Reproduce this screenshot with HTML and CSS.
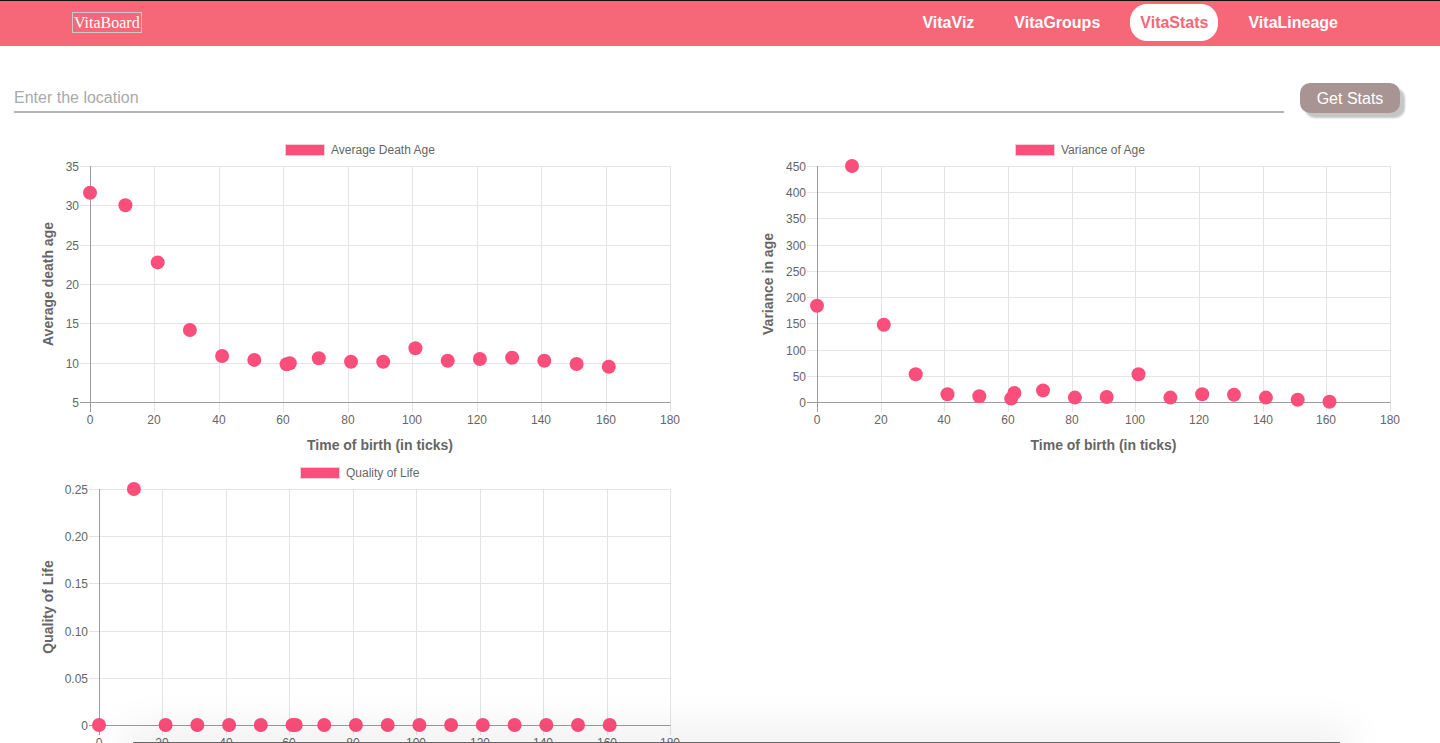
FILE: index.html
```html
<!DOCTYPE html>
<html lang="en">
<head>
<meta charset="utf-8">
<title>VitaStats</title>
<link rel="stylesheet" href="styles.css">
</head>
<body>
<header class="topbar">
  <a class="logo" href="#">VitaBoard</a>
  <nav class="nav-links">
    <a class="nav-link" href="#">VitaViz</a>
    <a class="nav-link" href="#">VitaGroups</a>
    <a class="nav-link active" href="#">VitaStats</a>
    <a class="nav-link" href="#">VitaLineage</a>
  </nav>
</header>
<main>
  <form class="search-row">
    <input class="search-input" type="text" placeholder="Enter the location">
    <button class="search-btn" type="button">Get Stats</button>
  </form>
  <section class="charts">
    <div class="chart"><svg id="c1" class="chart-svg" width="640" height="320" viewBox="0 0 640 320"></svg></div>
    <div class="chart"><svg id="c2" class="chart-svg" width="640" height="320" viewBox="0 0 640 320"></svg></div>
    <div class="chart"><svg id="c3" class="chart-svg" width="640" height="320" viewBox="0 0 640 320"></svg></div>
  </section>
</main>
<div class="dock-shadow"></div>
<script src="script.js"></script>
</body>
</html>
```

FILE: styles.css
```css
html {
  overflow: hidden;
}
body {
  margin: 0;
  font-family: "Liberation Sans", Arial, sans-serif;
  background: #ffffff;
  border-top: 1px solid #111;
}
.topbar {
  height: 45px;
  box-sizing: border-box;
  padding: 0 92px 2px 72px;
  background: #f66777;
  display: flex;
  align-items: center;
  justify-content: space-between;
}
.logo {
  font-family: "Liberation Serif", "Times New Roman", serif;
  font-size: 16px;
  line-height: 19px;
  color: #fff;
  text-decoration: none;
  border: 1px solid #c9c9c9;
  padding: 0 1px;
}
.nav-links {
  display: flex;
  gap: 20px;
}
.nav-link {
  display: block;
  height: 37px;
  line-height: 37px;
  padding: 0 10px;
  border-radius: 17px;
  color: #fff;
  font-weight: bold;
  font-size: 16px;
  text-decoration: none;
}
.nav-link.active {
  background: #fff;
  color: #f66777;
}
.search-row {
  margin: 35px 0 0;
  padding: 0 40px 0 14px;
  display: flex;
  align-items: flex-end;
  gap: 16px;
}
.search-input {
  flex: 1;
  height: 32px;
  box-sizing: border-box;
  padding: 4px 0 0;
  border: none;
  border-bottom: 2px solid #b5b5b5;
  font-family: "Liberation Sans", Arial, sans-serif;
  font-size: 16px;
  color: #333;
  background: transparent;
  outline: none;
}
.search-input::placeholder {
  color: #a9a9a9;
}
.search-btn {
  width: 100px;
  height: 30px;
  border: none;
  border-radius: 10px;
  background: #a99494;
  color: #fff;
  font-family: "Liberation Sans", Arial, sans-serif;
  font-size: 16px;
  box-shadow: 5px 5px 2px #c6c6c6;
  padding: 2px 0 0;
}
.charts {
  margin-top: 20px;
  display: grid;
  grid-template-columns: 720px 720px;
  row-gap: 3px;
}
.chart {
  padding: 0 40px;
}
.chart-svg {
  display: block;
}
.grid {
  stroke: #e4e4e4;
  stroke-width: 1;
}
.axis {
  stroke: #9c9c9c;
  stroke-width: 1;
}
.tick,
.legend-text {
  font-family: "Liberation Sans", Arial, sans-serif;
  font-size: 12px;
  fill: #666;
}
.axis-title {
  font-family: "Liberation Sans", Arial, sans-serif;
  font-size: 14px;
  font-weight: bold;
  fill: #666;
}
.point {
  fill: #fb4e7b;
}
.legend-box {
  fill: #fb4e7b;
  stroke: #f2cdd6;
  stroke-width: 1;
}
.dock-shadow {
  position: fixed;
  left: 133px;
  right: 100px;
  bottom: -1px;
  height: 2px;
  background: #666;
  box-shadow: 0 0 40px 10px rgba(0, 0, 0, 0.10);
}
```

FILE: script.js
```javascript
(function () {
  var NS = 'http://www.w3.org/2000/svg';
  var X1 = 630, YT = 33, YB = 269, XMAX = 180;

  var charts = [
    {
      id: 'c1', legend: 'Average Death Age', legendX: 245, x0: 50,
      yTitle: 'Average death age', yMin: 5, yMax: 35, yStep: 5,
      fmt: function (v) { return String(Math.round(v)); },
      data: [[0, 31.6], [11, 30.0], [21, 22.75], [31, 14.15], [41, 10.85], [51, 10.35], [61, 9.8], [62, 9.92],
             [71, 10.55], [81, 10.12], [91, 10.12], [101, 11.83], [111, 10.25], [121, 10.47], [131, 10.63],
             [141, 10.25], [151, 9.83], [161, 9.49]]
    },
    {
      id: 'c2', legend: 'Variance of Age', legendX: 255, x0: 57,
      yTitle: 'Variance in age', yMin: 0, yMax: 450, yStep: 50,
      fmt: function (v) { return String(Math.round(v)); },
      data: [[0, 183.6], [11, 450], [21, 147.4], [31, 52.8], [41, 14.6], [51, 10.8], [61, 6.4], [62, 17.2],
             [71, 22.2], [81, 8.3], [91, 9.5], [101, 52.8], [111, 8.3], [121, 14.6], [131, 14], [141, 8.3],
             [151, 4.4], [161, 0.6]]
    },
    {
      id: 'c3', legend: 'Quality of Life', legendX: 260, x0: 59,
      yTitle: 'Quality of Life', yMin: 0, yMax: 0.25, yStep: 0.05,
      fmt: function (v) { return v < 0.001 ? '0' : v.toFixed(2); },
      data: [[0, 0], [11, 0.25], [21, 0], [31, 0], [41, 0], [51, 0], [61, 0], [62, 0], [71, 0], [81, 0],
             [91, 0], [101, 0], [111, 0], [121, 0], [131, 0], [141, 0], [151, 0], [161, 0]]
    }
  ];

  function el(name, attrs, parent, text) {
    var e = document.createElementNS(NS, name);
    for (var k in attrs) { e.setAttribute(k, attrs[k]); }
    if (text != null) { e.textContent = text; }
    parent.appendChild(e);
    return e;
  }
  function px(v) { return Math.round(v) + 0.5; }

  charts.forEach(function (c) {
    var svg = document.getElementById(c.id);
    if (!svg) { return; }
    var x0 = c.x0;
    var sx = function (v) { return x0 + (X1 - x0) * v / XMAX; };
    var sy = function (v) { return YB - (YB - YT) * (v - c.yMin) / (c.yMax - c.yMin); };

    el('rect', { x: c.legendX + 0.5, y: 11.5, width: 39, height: 11, 'class': 'legend-box' }, svg);
    el('text', { x: c.legendX + 46, y: 21.3, 'class': 'legend-text' }, svg, c.legend);

    var n = Math.round((c.yMax - c.yMin) / c.yStep);
    var i, v, y, x;
    for (i = 1; i <= n; i++) {
      v = c.yMin + i * c.yStep;
      y = px(sy(v));
      el('line', { x1: x0 - 10, y1: y, x2: X1 + 0.5, y2: y, 'class': 'grid' }, svg);
    }
    for (i = 1; i <= 9; i++) {
      x = px(sx(i * 20));
      el('line', { x1: x, y1: YT, x2: x, y2: YB + 10, 'class': 'grid' }, svg);
    }
    el('line', { x1: x0 - 10, y1: px(YB), x2: X1 + 0.5, y2: px(YB), 'class': 'axis' }, svg);
    el('line', { x1: px(x0), y1: YT, x2: px(x0), y2: YB + 10, 'class': 'axis' }, svg);

    for (i = 0; i <= n; i++) {
      v = c.yMin + i * c.yStep;
      el('text', { x: x0 - 11, y: Math.round(sy(v)) + 4.5, 'class': 'tick', 'text-anchor': 'end' }, svg, c.fmt(v));
    }
    for (i = 0; i <= 9; i++) {
      el('text', { x: Math.round(sx(i * 20)), y: YB + 21.5, 'class': 'tick', 'text-anchor': 'middle' }, svg, String(i * 20));
    }

    el('text', { transform: 'translate(13,' + ((YT + YB) / 2) + ') rotate(-90)', 'class': 'axis-title', 'text-anchor': 'middle' }, svg, c.yTitle);
    el('text', { x: (x0 + X1) / 2, y: 317, 'class': 'axis-title', 'text-anchor': 'middle' }, svg, 'Time of birth (in ticks)');

    c.data.forEach(function (d) {
      el('circle', { cx: sx(d[0]).toFixed(1), cy: sy(d[1]).toFixed(1), r: 7, 'class': 'point' }, svg);
    });
  });
})();
```
